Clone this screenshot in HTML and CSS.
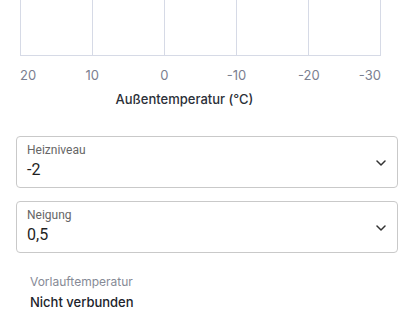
FILE: index.html
```html
<!DOCTYPE html>
<html lang="de">
<head>
    <meta charset="UTF-8">
    <meta name="viewport" content="width=device-width, initial-scale=1.0">
    <title>Heizkurve</title>
    <link rel="stylesheet" href="styles.css">
</head>
<body>
    <div class="page">
        <!-- Heizkurve Diagramm -->
        <div class="chart">
            <div class="chart-grid">
                <div class="grid-cell"></div>
                <div class="grid-cell"></div>
                <div class="grid-cell"></div>
                <div class="grid-cell"></div>
                <div class="grid-cell"></div>
            </div>
            <div class="ticks">
                <span class="tick tick-first"><span>20</span></span>
                <span class="tick"><span>10</span></span>
                <span class="tick"><span>0</span></span>
                <span class="tick"><span>-10</span></span>
                <span class="tick"><span>-20</span></span>
                <span class="tick tick-last"><span>-30</span></span>
            </div>
            <div class="axis-title">Außentemperatur (°C)</div>
        </div>

        <div class="select-field">
            <div class="select-text">
                <label class="select-label">Heizniveau</label>
                <div class="select-value">-2</div>
            </div>
            <svg class="chevron" width="10" height="6" viewBox="0 0 10 6">
                <path d="M1 1 L5 5 L9 1" fill="none" stroke="#333" stroke-width="1.5" stroke-linecap="round" stroke-linejoin="round"/>
            </svg>
        </div>

        <div class="select-field">
            <div class="select-text">
                <label class="select-label">Neigung</label>
                <div class="select-value">0,5</div>
            </div>
            <svg class="chevron" width="10" height="6" viewBox="0 0 10 6">
                <path d="M1 1 L5 5 L9 1" fill="none" stroke="#333" stroke-width="1.5" stroke-linecap="round" stroke-linejoin="round"/>
            </svg>
        </div>

        <div class="status">
            <div class="status-label">Vorlauftemperatur</div>
            <div class="status-value">Nicht verbunden</div>
        </div>
    </div>
</body>
</html>
```

FILE: styles.css
```css
* {
    margin: 0;
    padding: 0;
    box-sizing: border-box;
}

body {
    font-family: Inter, 'Noto Sans', Arial, sans-serif;
    background: #fff;
    color: #222;
    width: 400px;
    height: 318px;
    overflow: hidden;
}

.page {
    padding: 0 2px 0 16px;
}

.chart {
    padding: 0 17px 0 4px;
}

.chart-grid {
    display: flex;
    height: 56px;
    border-bottom: 1px solid #d6dae6;
}

.grid-cell {
    flex: 1;
    border-left: 1px solid #d6dae6;
}

.grid-cell:last-child {
    border-right: 1px solid #d6dae6;
}

.ticks {
    display: flex;
    justify-content: space-between;
    margin-top: 11px;
    height: 16px;
    font-size: 13px;
    color: #7b8090;
}

.tick {
    width: 0;
    display: flex;
    justify-content: center;
    white-space: nowrap;
}

.tick-first {
    justify-content: flex-start;
}

.tick-last {
    justify-content: flex-end;
}

.axis-title {
    margin-top: 8px;
    padding-right: 32px;
    text-align: center;
    font-size: 13px;
    font-weight: 500;
    color: #2b2f38;
}

.select-field {
    display: flex;
    align-items: center;
    height: 52px;
    margin-top: 29px;
    padding: 0 11px 0 10px;
    border: 1px solid #c9c9c9;
    border-radius: 4px;
    font-family: Roboto, Arial, sans-serif;
}

.select-field + .select-field {
    margin-top: 13px;
}

.select-text {
    flex: 1;
}

.select-label {
    display: block;
    font-size: 12px;
    color: #666;
    line-height: 15px;
}

.select-value {
    font-size: 16px;
    color: #1f1f1f;
    line-height: 22px;
    margin-top: 1px;
}

.chevron {
    margin-top: 1px;
}

.status {
    padding: 21px 14px 0;
}

.status-label {
    font-size: 12px;
    color: #868a96;
    line-height: 16px;
}

.status-value {
    margin-top: 3px;
    font-size: 13px;
    font-weight: 500;
    color: #20232b;
    line-height: 18px;
}
```
